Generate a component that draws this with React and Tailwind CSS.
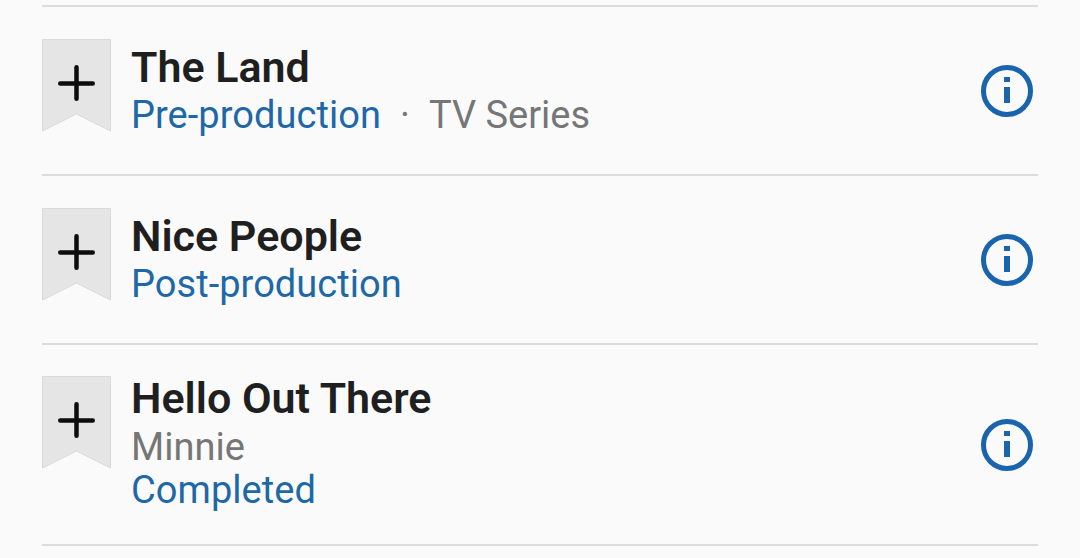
const Row = ({ h, title, lines, top, mark = "mt-[32px]" }) => (
  <div className="flex items-center border-b-2 border-[#dcdcdc] mx-[42px]" style={{height: h}}>
    <div className={"self-start w-[69px] h-[93px] shrink-0 " + mark}>
      <svg width="69" height="93" viewBox="0 0 69 93" className="block">
        <path d="M0.5 0.5H68.5V92L34.5 75L0.5 92Z" fill="#e5e5e5" stroke="#dadada" strokeWidth="1" />
        <path d="M18.25 44.5H50.75M34.5 28.25V59.75" stroke="#0c0c0c" strokeWidth="4.5" strokeLinecap="round" fill="none" />
      </svg>
    </div>
    <div className="self-start ml-[20px] flex-1" style={{marginTop: top}}>
      <div className="text-[43px] leading-[46px] font-semibold text-[#1f1f1f]">{title}</div>
      {lines}
    </div>
    <svg width="54" height="54" viewBox="0 0 54 54" className="shrink-0 mr-[4px]" fill="none">
      <circle cx="27" cy="27" r="23.5" stroke="#1a63ad" strokeWidth="5" />
      <rect x="24" y="13" width="6" height="5" fill="#1a63ad" />
      <rect x="24" y="23" width="6" height="16" fill="#1a63ad" />
    </svg>
  </div>
);
export default function App() {
  const blue = "text-[38px] leading-[46px] text-[#1e68a8] tracking-[0.05px]";
  const gray = "text-[38px] text-[#767676]";
  return (
    <div className="w-[1080px] h-[558px] overflow-hidden bg-[#fafafa] pt-[5px]" style={{fontFamily: 'Roboto, sans-serif'}}>
      <div className="mx-[42px] border-b-2 border-[#dcdcdc]" />
      <Row h={169} top="37px" title="The Land" lines={<div className="flex pt-[2px]"><span className={blue}>Pre-production</span><span className="text-[38px] leading-[46px] text-[#767676] ml-[19px]">·</span><span className={gray + " leading-[46px] ml-[19px]"}>TV Series</span></div>} />
      <Row h={169} top="37px" title="Nice People" lines={<div className={blue + " pt-[2px]"}>Post-production</div>} />
      <Row h={201} top="30px" mark="mt-[31px]" title="Hello Out There" lines={<><div className={gray + " leading-[40px] pt-[6px]"}>Minnie</div><div className={blue}>Completed</div></>} />
    </div>
  );
}
